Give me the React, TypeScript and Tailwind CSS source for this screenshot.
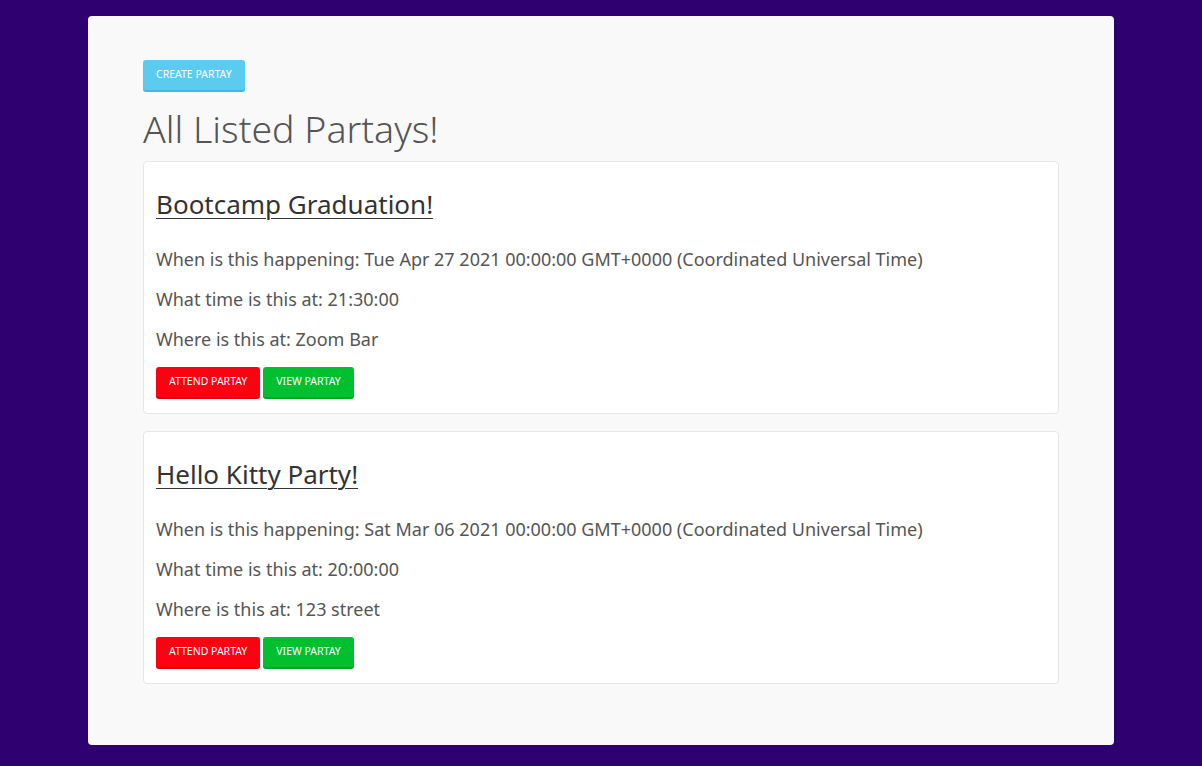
const parties = [
  {
    id: 1,
    name: "Bootcamp Graduation!",
    date: "Tue Apr 27 2021 00:00:00 GMT+0000 (Coordinated Universal Time)",
    time: "21:30:00",
    location: "Zoom Bar",
  },
  {
    id: 2,
    name: "Hello Kitty Party!",
    date: "Sat Mar 06 2021 00:00:00 GMT+0000 (Coordinated Universal Time)",
    time: "20:00:00",
    location: "123 street",
  },
];

function PartyCard({ party }: { party: (typeof parties)[number] }) {
  return (
    <div className="bg-white border border-[#e6e6e6] rounded-[4px] px-[12px] pt-[26px] pb-[14px]">
      <a href="#" className="block text-[26px] leading-[32px] text-[#333] underline underline-offset-[4px] decoration-1">
        {party.name}
      </a>
      <div className="mt-[26px] flex flex-col gap-[14px] text-[18px] leading-[26px] text-[#555]">
        <p>When is this happening: {party.date}</p>
        <p>What time is this at: {party.time}</p>
        <p>Where is this at: {party.location}</p>
      </div>
      <div className="mt-[15px] flex gap-[3px]">
        <button className="h-[32px] px-[13px] rounded-[3px] bg-[#ff0013] border-b-2 border-[#e0000f] text-white text-[10.5px] uppercase">
          Attend Partay
        </button>
        <button className="h-[32px] px-[13px] rounded-[3px] bg-[#00c02f] border-b-2 border-[#00a528] text-white text-[10.5px] uppercase">
          View Partay
        </button>
      </div>
    </div>
  );
}

export default function App() {
  return (
    <div className="min-h-[766px] bg-[#2f0070] px-[88px] pt-[16px] pb-[21px] font-['Noto_Sans',sans-serif]">
      <div className="bg-[#f9f9f9] rounded-[4px] px-[55px] pt-[44px] pb-[61px] min-h-[729px]">
        <button className="h-[32px] px-[13px] rounded-[3px] bg-[#5bcbf0] border-b-2 border-[#3dbbe6] text-white text-[10.5px] uppercase">
          Create Partay
        </button>
        <h1 className="mt-[14px] mb-[9px] text-[37.5px] leading-[46px] font-light text-[#555]">All Listed Partays!</h1>
        <div className="flex flex-col gap-[17px]">
          {parties.map((p) => (
            <PartyCard key={p.id} party={p} />
          ))}
        </div>
      </div>
    </div>
  );
}
